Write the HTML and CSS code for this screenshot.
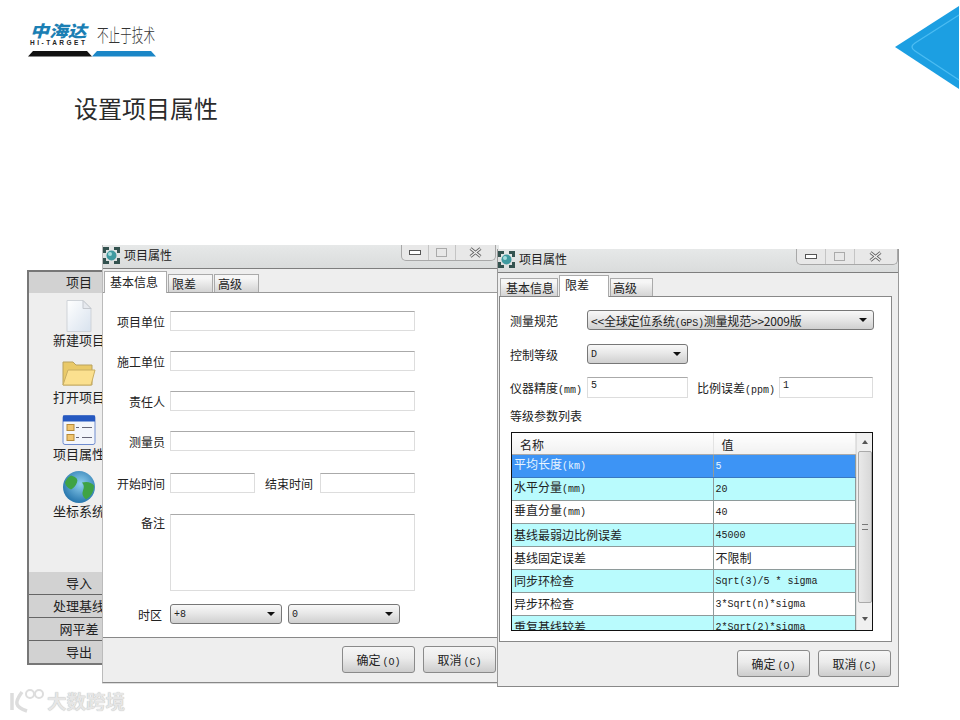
FILE: index.html
```html
<!DOCTYPE html>
<html lang="zh">
<head>
<meta charset="utf-8">
<title>设置项目属性</title>
<link rel="stylesheet" href="styles.css">
</head>
<body>
<div class="slide">
  <header class="brand">
    <div class="brand-top">
      <div class="brand-mark">
        <div class="brand-cn">中海达</div>
        <div class="brand-en">HI-TARGET</div>
      </div>
      <div class="brand-slogan">不止于技术</div>
    </div>
    <svg class="brand-bar" width="128" height="6" viewBox="0 0 128 6"><polygon points="0,5.5 5,0 59,0 64,5.5" fill="#111"/><polygon points="64,5.5 69,0 123,0 128,5.5" fill="#1b86c6"/></svg>
  </header>
  <svg class="corner" width="66" height="84" viewBox="0 0 66 84">
    <polygon points="1,41 65,0 65,83" fill="#1c9fe2"/>
    <path d="M65 9 L21 37 Q15 41 21 45 L65 74" fill="none" stroke="#4bbcf2" stroke-width="1.3"/>
  </svg>
  <h1 class="page-title">设置项目属性</h1>

  <aside class="side">
    <div class="side-head">项目</div>
    <div class="side-body">
      <div class="side-item">
        <svg width="28" height="33" viewBox="0 0 28 33"><defs><linearGradient id="dg" x1="0" y1="0" x2="1" y2="1"><stop offset="0" stop-color="#fff"/><stop offset="1" stop-color="#d8e2ee"/></linearGradient></defs><path d="M2 1H18L26 9V32H2Z" fill="url(#dg)" stroke="#cfd3d8"/><path d="M18 1V9H26Z" fill="#e6e9ee" stroke="#c4c8ce"/></svg>
        <span>新建项目</span>
      </div>
      <div class="side-item">
        <svg width="35" height="28" viewBox="0 0 35 28"><path d="M2 26V3H12L15 6H31V26Z" fill="#e9c968" stroke="#b9a25f"/><path d="M2 26L7 11H34L30 26Z" fill="#fbe08f" stroke="#c9ae62"/></svg>
        <span>打开项目</span>
      </div>
      <div class="side-item">
        <svg width="34" height="31" viewBox="0 0 34 31"><rect x="1" y="1" width="32" height="29" rx="2" fill="#f3f6fb" stroke="#6f8ccf"/><rect x="1" y="1" width="32" height="6" fill="#2558c0"/><rect x="5" y="10" width="7" height="6" fill="#f0c56f" stroke="#b58a3a"/><rect x="5" y="20" width="7" height="6" fill="#f0c56f" stroke="#b58a3a"/><path d="M14 13H17M20 13H30M14 23H17M20 23H30" stroke="#667"/></svg>
        <span>项目属性</span>
      </div>
      <div class="side-item">
        <svg width="34" height="33" viewBox="0 0 34 33"><defs><radialGradient id="gb" cx=".55" cy=".4" r=".65"><stop offset="0" stop-color="#8fd0ef"/><stop offset="1" stop-color="#1f6fa8"/></radialGradient></defs><circle cx="17" cy="16.5" r="16" fill="url(#gb)"/><path d="M9 5Q17 7 15 12T9 19Q4 17 3 12Q5 7 9 5ZM20 12Q28 10 32 15Q32 24 24 29Q19 25 21 20T20 12Z" fill="#3fa344"/></svg>
        <span>坐标系统</span>
      </div>
    </div>
    <div class="side-head side-foot">导入</div>
    <div class="side-head side-foot">处理基线</div>
    <div class="side-head side-foot">网平差</div>
    <div class="side-head side-foot">导出</div>
  </aside>

  <section class="win win-a">
    <div class="titlebar">
      <svg class="appicon" width="17" height="17" viewBox="0 0 17 17"><path d="M0 0H6V3H3V6H0ZM17 0V6H14V3H11V0ZM0 17V11H3V14H6V17ZM17 17H11V14H14V11H17Z" fill="#33524f"/><circle cx="8.5" cy="8.5" r="5" fill="#3f9aa0"/><circle cx="7" cy="7" r="2" fill="#a5dcdc"/></svg>
      <span>项目属性</span>
      <div class="controls">
        <span class="ctl"><i class="c-min"></i></span><span class="ctl"><i class="c-max"></i></span><span class="ctl ctl-x"><svg width="13" height="11" viewBox="0 0 13 11"><path d="M1.5 1.5L11.5 9.5M11.5 1.5L1.5 9.5" stroke="#666" stroke-width="3"/><path d="M1.5 1.5L11.5 9.5M11.5 1.5L1.5 9.5" stroke="#f4f4f4" stroke-width="1.2"/></svg></span>
      </div>
    </div>
    <div class="tabs tabs-a">
      <span class="tab tab-on">基本信息</span><span class="tab">限差</span><span class="tab">高级</span>
    </div>
    <div class="form-a">
      <div class="row-a"><label>项目单位</label><span class="field f-wide"></span></div>
      <div class="row-a"><label>施工单位</label><span class="field f-wide"></span></div>
      <div class="row-a"><label>责任人</label><span class="field f-wide"></span></div>
      <div class="row-a"><label>测量员</label><span class="field f-wide"></span></div>
      <div class="row-a row-time"><label>开始时间</label><span class="field f-short"></span><label class="lab-end">结束时间</label><span class="field f-end"></span></div>
      <div class="row-a row-note"><label>备注</label><span class="field f-note"></span></div>
      <div class="row-a row-zone"><label>时区</label><span class="combo f-zone"><b>+8</b><i></i></span><span class="combo f-zone"><b>0</b><i></i></span></div>
    </div>
    <div class="footer">
      <button class="btn">确定<em>(O)</em></button><button class="btn">取消<em>(C)</em></button>
    </div>
  </section>

  <section class="win win-b">
    <div class="titlebar">
      <svg class="appicon" width="17" height="17" viewBox="0 0 17 17"><path d="M0 0H6V3H3V6H0ZM17 0V6H14V3H11V0ZM0 17V11H3V14H6V17ZM17 17H11V14H14V11H17Z" fill="#33524f"/><circle cx="8.5" cy="8.5" r="5" fill="#3f9aa0"/><circle cx="7" cy="7" r="2" fill="#a5dcdc"/></svg>
      <span>项目属性</span>
      <div class="controls">
        <span class="ctl"><i class="c-min"></i></span><span class="ctl"><i class="c-max"></i></span><span class="ctl ctl-x"><svg width="13" height="11" viewBox="0 0 13 11"><path d="M1.5 1.5L11.5 9.5M11.5 1.5L1.5 9.5" stroke="#666" stroke-width="3"/><path d="M1.5 1.5L11.5 9.5M11.5 1.5L1.5 9.5" stroke="#f4f4f4" stroke-width="1.2"/></svg></span>
      </div>
    </div>
    <div class="shell">
      <div class="tabs tabs-b">
        <span class="tab">基本信息</span><span class="tab tab-on">限差</span><span class="tab">高级</span>
      </div>
      <div class="panel">
        <div class="row-b row-spec"><label>测量规范</label><span class="combo f-spec"><b class="cjk">&lt;&lt;全球定位系统<em>(GPS)</em>测量规范&gt;&gt;2009版</b><i></i></span></div>
        <div class="row-b row-level"><label>控制等级</label><span class="combo f-level"><b>D</b><i></i></span></div>
        <div class="row-b row-prec"><label>仪器精度<em>(mm)</em></label><span class="field f-prec"><b>5</b></span><label class="lab-ppm">比例误差<em>(ppm)</em></label><span class="field f-ppm"><b>1</b></span></div>
        <div class="list-label">等级参数列表</div>
        <div class="grid-box">
          <div class="grid-clip">
            <table class="grid">
              <thead><tr><th>名称</th><th>值</th></tr></thead>
              <tbody>
                <tr class="sel"><td>平均长度<em>(km)</em></td><td><em>5</em></td></tr>
                <tr class="alt"><td>水平分量<em>(mm)</em></td><td><em>20</em></td></tr>
                <tr><td>垂直分量<em>(mm)</em></td><td><em>40</em></td></tr>
                <tr class="alt"><td>基线最弱边比例误差</td><td><em>45000</em></td></tr>
                <tr><td>基线固定误差</td><td>不限制</td></tr>
                <tr class="alt"><td>同步环检查</td><td><em>Sqrt(3)/5 * sigma</em></td></tr>
                <tr><td>异步环检查</td><td><em>3*Sqrt(n)*sigma</em></td></tr>
                <tr class="alt"><td>重复基线较差</td><td><em>2*Sqrt(2)*sigma</em></td></tr>
              </tbody>
            </table>
          </div>
          <div class="scroll">
            <span class="arr arr-up"></span>
            <span class="thumb"><u></u></span>
            <span class="arr arr-down"></span>
          </div>
        </div>
      </div>
      <div class="footer footer-b">
        <button class="btn">确定<em>(O)</em></button><button class="btn">取消<em>(C)</em></button>
      </div>
    </div>
  </section>

  <div class="mark">
    <svg width="37" height="26" viewBox="0 0 37 26"><path d="M4 5V22M14 4Q8 12 9 16T19 23" fill="none" stroke="#ddd" stroke-width="3.5"/><circle cx="22" cy="6" r="4" fill="none" stroke="#ddd" stroke-width="2"/><circle cx="31" cy="6" r="4" fill="none" stroke="#ddd" stroke-width="2"/></svg>
    <span>大数跨境</span>
  </div>
</div>
</body>
</html>
```
FILE: styles.css
```css
* { box-sizing: border-box; }
html, body { margin: 0; padding: 0; background: #fff; }
body { font-family: "Noto Sans CJK SC", "Liberation Sans", sans-serif; color: #222; }
.slide { position: relative; width: 960px; height: 720px; overflow: hidden; background: #fff; }

/* brand */
.brand { padding: 23px 0 0 28px; width: 180px; height: 62px; }
.brand-top { display: flex; align-items: flex-start; height: 28px; }
.brand-mark { width: 69px; padding-left: 2px; flex: none; }
.brand-cn { font-size: 16px; line-height: 15px; font-weight: 900; font-style: italic; color: #1b7fb4; white-space: nowrap; transform: scaleX(1.18); transform-origin: 0 50%; }
.brand-en { font-family: "Liberation Sans", sans-serif; font-size: 6.5px; line-height: 7px; margin-top: 1px; font-weight: 700; letter-spacing: 2.5px; color: #222; white-space: nowrap; }
.brand-slogan { font-size: 11.6px; line-height: 20px; font-weight: 300; color: #333; white-space: nowrap; flex: none; transform: scaleY(1.6); transform-origin: 50% 50%; margin-top: 1px; }
.brand-bar { display: block; }
.corner { position: absolute; right: 0; top: 6px; }
.page-title { margin: 28px 0 0 74px; font-size: 24px; line-height: 36px; font-weight: 400; color: #2b2b2b; }

/* side panel */
.side { position: absolute; left: 27px; top: 270px; width: 104px; height: 395px; border: 2px solid #777; background: #eee; display: flex; flex-direction: column; font-size: 13px; }
.side-head { height: 21px; line-height: 20px; text-align: center; background: #d2d2d2; flex: none; }
.side-foot { border-top: 1px solid #666; height: 23px; line-height: 21px; }
.side-foot:nth-last-child(4) { border-top: 0; height: 22px; }
.side-body { flex: 1; display: flex; flex-direction: column; align-items: center; padding-top: 6px; }
.side-item { display: flex; flex-direction: column; align-items: center; height: 57px; flex: none; }
.side-item svg { display: block; height: 34px; flex: none; }
.side-item span { line-height: 16px; margin-top: -1px; white-space: nowrap; }

/* windows */
.win { position: absolute; background: #eee; font-size: 12px; color: #222; display: flex; flex-direction: column; }
.win-a { left: 102px; top: 245px; width: 397px; height: 438px; border-left: 1px solid #bbb; border-bottom: 1px solid #888; box-shadow: 0 1px 0 #ddd; }
.win-b { left: 497px; top: 249px; width: 402px; height: 438px; border-left: 1px solid #999; border-right: 1px solid #999; border-bottom: 1px solid #888; }
.titlebar { position: relative; flex: none; height: 24px; display: flex; align-items: flex-start; gap: 4px; padding-top: 2px; background: linear-gradient(#e6e8e8, #dadcdc); border-bottom: 1px solid #7e7e7e; font-size: 12px; }
.titlebar span { line-height: 14px; padding-top: 1px; }
.appicon { flex: none; }
.controls { position: absolute; top: 0; right: 3px; height: 16px; width: 95px; display: flex; padding: 0; border: 1px solid #a8a8a8; border-top: 0; border-radius: 0 0 5px 5px; background: #e8e8e8; }
.win-b .controls { width: 102px; right: 0; }
.titlebar .ctl { flex: 27 0 0; display: flex; align-items: center; justify-content: center; padding: 0; border-right: 1px solid #c4c4c4; }
.titlebar .ctl-x { flex: 41 0 0; border-right: 0; }
.c-min { display: block; width: 12px; height: 5px; border: 1px solid #555; background: #fff; }
.c-max { display: block; width: 11px; height: 9px; border: 1px solid #aaa; }

/* tabs */
.tabs { flex: none; display: flex; align-items: flex-end; }
.tabs-a { height: 23px; padding-left: 1px; background: #eee; }
.tab { height: 18px; line-height: 17px; margin-right: 1px; border: 1px solid #aaa; border-bottom: 0; background: linear-gradient(#f6f6f6 20%, #d4d4d4); padding: 0 3px; white-space: nowrap; }
.tabs-a .tab { width: 45px; }
.tabs-a .tab-on { width: 63px; height: 22px; line-height: 20px; padding-left: 5px; background: #fff; position: relative; top: 1px; }

/* form A */
.form-a { flex: none; height: 345px; background: #fff; border-top: 1px solid #999; padding-top: 18px; }
.row-a { display: flex; align-items: center; height: 20px; margin-bottom: 20px; }
.row-a label { width: 62px; text-align: right; margin-right: 5px; white-space: nowrap; flex: none; }
.field { display: block; height: 20px; background: #fff; border: 1px solid #ddd; border-top-color: #aaa; flex: none; }
.f-wide { width: 245px; }
.f-short { width: 85px; }
.row-a .lab-end { width: 48px; margin: 0 7px 0 10px; }
.f-end { width: 95px; }
.row-time { margin-top: 22px; margin-bottom: 0; }
.row-note { align-items: flex-start; height: 77px; margin-top: 21px; margin-bottom: 13px; }
.row-note label { line-height: 18px; }
.f-note { width: 245px; height: 77px; }
.row-zone label { width: 59px; margin-right: 8px; }
.combo { display: flex; align-items: center; justify-content: space-between; height: 20px; padding: 0 6px 0 3px; border: 1px solid #777; border-radius: 3px; background: linear-gradient(#f8f8f8, #e8e8e8 45%, #cfcfcf); flex: none; }
.combo b, .field b { font-weight: 400; font-family: "Liberation Mono", monospace; font-size: 10px; }
.combo b.cjk { font-family: inherit; font-size: 12px; letter-spacing: -.2px; }
.combo i { width: 0; height: 0; border-left: 4px solid transparent; border-right: 4px solid transparent; border-top: 4px solid #111; flex: none; }
.f-zone { width: 112px; margin-right: 6px; }
.field b { padding-left: 3px; line-height: 16px; display: block; }
em { font-style: normal; font-family: "Liberation Mono", monospace; font-size: 10px; }

/* footer */
.footer { flex: 1; display: flex; justify-content: flex-end; gap: 8px; align-items: flex-start; border-top: 1px solid #888; background: #eee; padding: 8px 3px 0 0; }
.btn { width: 73px; height: 27px; padding: 0; border: 1px solid #8a8a8a; border-radius: 3px; background: linear-gradient(#f6f6f6, #ebebeb 45%, #cdcdcd); font: inherit; color: #222; }
.btn em { margin-left: 2px; }

/* window B */
.shell { flex: 1; display: flex; flex-direction: column; padding: 0 6px 0 1px; min-height: 0; }
.tabs-b { height: 23px; padding-left: 1px; }
.tabs-b .tab { height: 18px; width: 58px; padding-left: 5px; }
.tabs-b .tab:nth-child(3) { width: 43px; padding-left: 2px; }
.tabs-b .tab-on { width: 50px; height: 22px; line-height: 18px; padding-left: 5px; background: #fff; position: relative; top: 1px; }
.panel { flex: none; height: 346px; background: #fff; border: 1px solid #888; padding: 13px 0 0 10px; }
.row-b { display: flex; align-items: center; height: 20px; }
.row-b label { width: 76px; margin-right: 1px; white-space: nowrap; flex: none; }
.f-spec { width: 287px; padding-left: 3px; }
.f-level { width: 101px; }
.row-level { margin-top: 14px; }
.row-prec { margin-top: 13px; height: 21px; }
.f-prec { width: 101px; height: 21px; }
.row-b .lab-ppm { width: 82px; margin: 0 0 0 9px; }
.f-ppm { width: 94px; height: 21px; }
.list-label { margin-top: 9px; line-height: 18px; }
.grid-box { display: flex; width: 362px; height: 199px; margin: 7px 0 0 1px; border: 1px solid #111; background: #fff; }
.grid-clip { width: 344px; height: 197px; overflow: hidden; flex: none; }
.grid { border-collapse: collapse; table-layout: fixed; width: 344px; }
.grid th { height: 21px; font-weight: 400; text-align: left; padding: 2px 0 0 8px; background: linear-gradient(#fff, #f1f1f1); border-right: 1px solid #e3e3e3; border-bottom: 1px solid #aaa; }
.grid th:first-child { width: 201px; }
.grid td { height: 23px; line-height: 16px; padding: 0 0 0 2px; border-bottom: 1px solid #8e9a9a; border-right: 1px solid #8e9a9a; white-space: nowrap; overflow: hidden; }
.grid .alt td { background: #b9fbfd; }
.grid .sel td { background: #3d94f5; color: #e8f4ff; border-bottom-color: #3a78c0; }
.scroll { flex: 1; display: flex; flex-direction: column; align-items: center; background: #f0f0f0; border-left: 1px solid #ddd; }
.arr { flex: none; width: 0; height: 0; border-left: 3px solid transparent; border-right: 3px solid transparent; }
.arr-up { border-bottom: 4px solid #555; margin-top: 7px; }
.arr-down { border-top: 4px solid #555; margin-top: 14px; }
.thumb { display: flex; align-items: center; justify-content: center; width: 14px; height: 152px; margin-top: 7px; border: 1px solid #aaa; border-radius: 2px; background: linear-gradient(90deg, #e9e9e9, #d8d8d8); flex: none; }
.thumb u { display: block; width: 6px; height: 6px; border-top: 1px solid #777; border-bottom: 1px solid #777; }
.footer-b { border-top: 0; padding: 8px 1px 0 0; }

/* watermark */
.mark { position: absolute; left: 8px; top: 688px; display: flex; align-items: center; gap: 2px; }
.mark svg { flex: none; }
.mark span { font-size: 19.5px; line-height: 26px; font-weight: 700; color: #e6e6e6; text-shadow: 0 0 1px #aaa; white-space: nowrap; }
```
